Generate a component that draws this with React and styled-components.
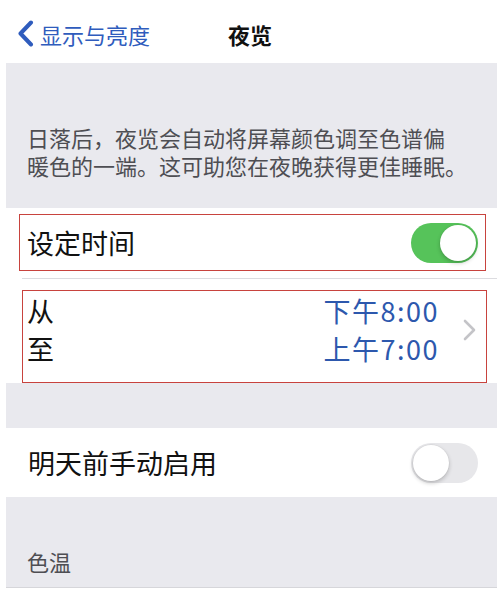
import React from "react";
import styled, { createGlobalStyle } from "styled-components";

const Global = createGlobalStyle`
  html, body { margin: 0; padding: 0; background: #ffffff; }
  body { font-family: "Noto Sans CJK SC", "Noto Sans", sans-serif; }
`;

const Page = styled.div`
  width: 500px;
  display: flex;
  flex-direction: column;
`;

const Nav = styled.div`
  height: 63px;
  display: grid;
  grid-template-columns: 1fr auto 1fr;
  align-items: center;
  background: #fff;
  padding: 0 0 0 17px;
  box-sizing: border-box;
`;

const Back = styled.div`
  display: flex;
  align-items: center;
  gap: 6px;
  color: #2f5cbd;
  font-size: 22px;
  padding-top: 4px;
`;

const Title = styled.div`
  font-size: 22px;
  font-weight: 700;
  color: #111;
  padding-top: 4px;
  padding-right: 17px;
`;

const Body = styled.div`
  margin: 0 3px 0 6px;
  display: flex;
  flex-direction: column;
`;

const GraySection = styled.div`
  background: #e9e9ee;
  height: ${(p) => p.$h}px;
  box-sizing: border-box;
  padding: ${(p) => p.$pad || "0"};
  border-bottom: ${(p) => (p.$line ? "1px solid #d6d6da" : "none")};
`;

const Desc = styled.div`
  padding-left: 21px;
  font-size: 22px;
  color: #4e4e53;
  display: flex;
  flex-direction: column;
`;

const DescLine = styled.div`
  height: 28px;
  line-height: 28px;
  overflow: visible;
  white-space: nowrap;
`;

const Footer = styled.div`
  padding-left: 21px;
  font-size: 22px;
  line-height: 28px;
  color: #4e4e53;
`;

const Row = styled.div`
  background: #fff;
  height: ${(p) => p.$h}px;
  box-sizing: border-box;
  padding: ${(p) => p.$pad};
  display: flex;
  flex-direction: column;
`;

const Outline = styled.div`
  flex: 1;
  border: ${(p) => (p.$on ? "1.5px solid #c8433e" : "1.5px solid transparent")};
  display: flex;
  align-items: center;
  justify-content: space-between;
  padding: ${(p) => p.$pad};
`;

const Separator = styled.div`
  height: 1px;
  background: #dcdce0;
  margin-left: 16px;
`;

const Label = styled.div`
  font-size: 27px;
  color: #111;
  line-height: ${(p) => p.$lh || "normal"};
`;

const Stack = styled.div`
  display: flex;
  flex-direction: column;
  align-items: ${(p) => p.$align || "flex-start"};
`;

const Value = styled.div`
  font-size: 27px;
  line-height: 38px;
  color: #2d58ad;
  letter-spacing: 1.5px;
`;

const Right = styled.div`
  display: flex;
  align-items: center;
  gap: 24px;
`;

const Track = styled.div`
  width: 67px;
  height: 40px;
  border-radius: 20px;
  box-sizing: border-box;
  background: ${(p) => (p.$on ? "#56c35a" : "#e7e7ea")};
  position: relative;
`;

const Knob = styled.div`
  position: absolute;
  top: 2px;
  left: ${(p) => (p.$on ? "29px" : "2px")};
  width: 36px;
  height: 36px;
  border-radius: 50%;
  background: #fff;
  box-shadow: 0 2px 4px rgba(0, 0, 0, 0.22), 0 0 0 0.5px rgba(0, 0, 0, 0.06);
`;

const Toggle = ({ on }) => (
  <Track $on={on}>
    <Knob $on={on} />
  </Track>
);

export default function App() {
  return (
    <Page>
      <Global />
      <Nav>
        <Back>
          <svg width="17" height="27" viewBox="0 0 17 27">
            <path d="M14 2.5 L3.5 13.5 L14 24.5" fill="none" stroke="#2f5cbd" strokeWidth="4" strokeLinecap="round" strokeLinejoin="round" />
          </svg>
          <span>显示与亮度</span>
        </Back>
        <Title>夜览</Title>
        <div />
      </Nav>
      <Body>
        <GraySection $h={145} $pad="60px 0 0 0">
          <Desc>
            <DescLine>日落后，夜览会自动将屏幕颜色调至色谱偏</DescLine>
            <DescLine>暖色的一端。这可助您在夜晚获得更佳睡眠。</DescLine>
          </Desc>
        </GraySection>
        <Row $h={70} $pad="6px 11px 7px 13px">
          <Outline $on $pad="0 7px 0 7px">
            <Label>设定时间</Label>
            <Toggle on />
          </Outline>
        </Row>
        <Separator />
        <Row $h={104} $pad="11px 10px 0 16px">
          <Outline $on $pad="0 10px 14px 4px">
            <Stack>
              <Label $lh="38px">从</Label>
              <Label $lh="38px">至</Label>
            </Stack>
            <Right>
              <Stack $align="flex-end">
                <Value>下午8:00</Value>
                <Value>上午7:00</Value>
              </Stack>
              <svg width="13" height="22" viewBox="0 0 13 22">
                <path d="M2 2 L11 11 L2 20" fill="none" stroke="#c4c4c8" strokeWidth="2.6" strokeLinecap="round" strokeLinejoin="round" />
              </svg>
            </Right>
          </Outline>
        </Row>
        <GraySection $h={45} />
        <Row $h={69} $pad="0 18px 0 21px">
          <Outline $pad="0">
            <Label>明天前手动启用</Label>
            <Toggle />
          </Outline>
        </Row>
        <GraySection $h={91} $pad="50px 0 0 0" $line>
          <Footer>色温</Footer>
        </GraySection>
      </Body>
    </Page>
  );
}
